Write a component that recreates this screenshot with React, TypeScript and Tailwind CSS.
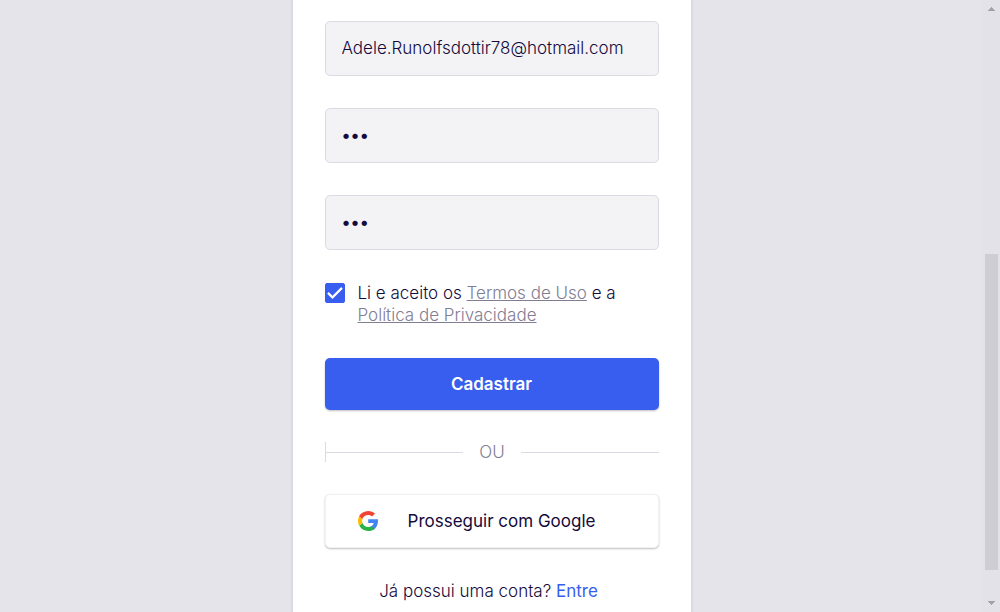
import React from "react";

const fieldClass =
  "block h-[55px] w-full rounded-[5px] border border-[#dadae2] bg-[#f3f3f6] px-4 pb-0.5 text-[17px] text-[#140a3c] outline-none";

function GoogleLogo() {
  return (
    <svg viewBox="0 0 48 48" className="size-5 shrink-0" aria-hidden="true">
      <path fill="#4285F4" d="M48 20H24.500v8.600h13.200c-1.200 5.400-5.600 8.600-10.200 9.400l7.600 8.200C43.500 42 48 34 48 24.500c0-1.600 0-3-.2-4.500z" />
      <path fill="#28B446" d="M24.500 48c6.300 0 11.700-2 15.500-5.500l-7.600-6.100c-2.200 1.400-4.900 2.200-7.900 2.200-6.300 0-11.600-4-13.500-9.700l-7.900 6.100C7.100 42.800 15.100 48 24.500 48z" />
      <path fill="#FBBB00" d="M10.600 29c-.5-1.500-.8-3.200-.8-5s.3-3.500.8-5l-8.100-6.300A23.800 23.800 0 0 0 0 24c0 4.100.9 7.800 2.700 11.300z" />
      <path fill="#F14336" d="M24.500 9.500c3.600 0 6.800 1.300 9.300 3.600l7-6.900C36.500 2.300 31 0 24.500 0 15 0 6.700 5 2.500 12.700l8.200 6.300c1.900-5.500 7.300-9.500 13.800-9.500z" />
    </svg>
  );
}

function ScrollRail() {
  return (
    <div className="flex w-[17px] shrink-0 flex-col items-center bg-[#e3e2e8] pt-[7px] pb-[7px]" aria-hidden="true">
      <svg viewBox="0 0 7 4" className="h-1 w-[7px]">
        <path fill="#a3a2a7" d="M3 0h1v1h1v1h1v1h1v1H0V3h1V2h1V1h1z" />
      </svg>
      <div className="flex w-full flex-1 flex-col items-center pt-4 pb-[31px]">
        <div className="flex-[227]" />
        <div className="w-[13px] flex-[316] bg-[#cecdd3]" />
      </div>
      <svg viewBox="0 0 7 4" className="h-1 w-[7px]">
        <path fill="#a3a2a7" d="M0 0h7v1H6v1H5v1H4v1H3V3H2V2H1V1H0z" />
      </svg>
    </div>
  );
}

export default function App() {
  return (
    <div className="flex min-h-screen bg-[#e5e4ea] font-['Inter',sans-serif] text-[17px] leading-[22px] font-light text-[#140a3c]">
      <main className="flex flex-1 justify-center">
        <form
          className="flex w-full max-w-[402px] flex-col gap-8 border-x-2 border-[#dadae2] bg-white px-8 pt-[21px]"
          onSubmit={(event) => event.preventDefault()}
        >
          <input className={`${fieldClass} font-light`} type="email" aria-label="E-mail" defaultValue="Adele.Runolfsdottir78@hotmail.com" />
          <input className={`${fieldClass} font-medium`} type="password" aria-label="Senha" defaultValue="abc" />
          <input className={`${fieldClass} font-medium`} type="password" aria-label="Confirmar senha" defaultValue="abc" />

          <div className="flex items-start gap-[13px]">
            <span className="mt-px grid shrink-0">
              <input
                id="terms"
                type="checkbox"
                defaultChecked
                className="peer col-start-1 row-start-1 size-5 appearance-none rounded-xs border border-[#375eef] checked:bg-[#375eef]"
              />
              <svg
                viewBox="0 0 20 20"
                className="pointer-events-none invisible col-start-1 row-start-1 size-5 peer-checked:visible"
                fill="none"
                stroke="white"
                strokeWidth="2.2"
                aria-hidden="true"
              >
                <path d="M2.900 9.900l4.600 4.500L17 4.900" />
              </svg>
            </span>
            <label htmlFor="terms">
              Li e aceito os{" "}
              <a href="#termos" className="text-[#817d93] underline">Termos de Uso</a> e a{" "}
              <a href="#privacidade" className="text-[#817d93] underline">Política de Privacidade</a>
            </label>
          </div>

          <button
            type="submit"
            className="h-[52px] rounded-[5px] bg-[#375eef] font-semibold text-white shadow-[0_1px_2px_rgba(0,0,0,0.25)]"
          >
            Cadastrar
          </button>

          <div className="flex h-5 items-center gap-4 border-l border-[#dadae2] text-[#817d93]">
            <span className="h-px flex-1 bg-[#dadae2]" />
            OU
            <span className="h-px flex-1 bg-[#dadae2]" />
          </div>

          <button
            type="button"
            className="flex h-[54px] items-center rounded-[5px] border border-[#f1f1f3] bg-white px-8 font-normal shadow-[0_1px_2px_rgba(0,0,0,0.25)]"
          >
            <GoogleLogo />
            <span className="flex-1">Prosseguir com Google</span>
          </button>

          <p className="pr-1.5 text-center">
            Já possui uma conta?{" "}
            <a href="#entrar" className="font-normal text-[#375eef]">Entre</a>
          </p>
        </form>
      </main>
      <ScrollRail />
    </div>
  );
}
